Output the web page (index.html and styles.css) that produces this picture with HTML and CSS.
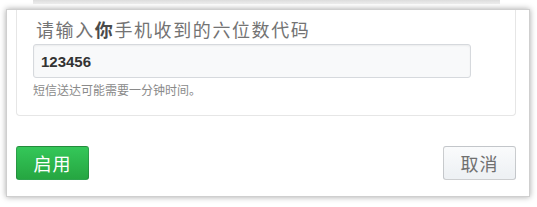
FILE: index.html
```html
<!DOCTYPE html>
<html lang="zh-CN">
<head>
    <meta charset="UTF-8">
    <meta name="viewport" content="width=device-width, initial-scale=1.0">
    <title>两步验证</title>
    <link rel="stylesheet" href="styles.css">
</head>
<body>
    <div class="shade"></div>
    <div class="modal">
        <div class="panel">
            <label class="label" for="otp">请输入<b>你</b>手机收到的六位数代码</label>
            <input class="input" id="otp" type="text" value="123456">
            <p class="hint">短信送达可能需要一分钟时间。</p>
        </div>
        <div class="footer">
            <button class="btn btn-primary">启用</button>
            <button class="btn btn-cancel">取消</button>
        </div>
    </div>
</body>
</html>
```

FILE: styles.css
```css
* {
    margin: 0;
    padding: 0;
    box-sizing: border-box;
}

body {
    width: 537px;
    height: 207px;
    overflow: hidden;
    background: #fff;
    font-family: "Liberation Sans", "Noto Sans CJK SC", sans-serif;
}

.shade {
    height: 4px;
    margin: 0 37px 0 33px;
    background: linear-gradient(#dcdcdc, #efefef);
}

.modal {
    width: 524px;
    height: 188px;
    margin: 5px 0 0 6px;
    border: 1px solid #cfcfcf;
    background: #fff;
    box-shadow: 0 0 6px rgba(0, 0, 0, 0.35);
}

.panel {
    height: 106px;
    margin: 0 13px 0 9px;
    padding: 9px 0 0 16px;
    border: 1px solid #e6e6e6;
    border-top: 0;
    border-radius: 0 0 4px 4px;
}

.label {
    display: block;
    height: 24px;
    padding-left: 3px;
    color: #737373;
    font-size: 18px;
    line-height: 24px;
    letter-spacing: 1.6px;
}

.label b {
    color: #4a4a4a;
}

.input {
    display: block;
    width: 438px;
    height: 34px;
    margin-top: 1px;
    padding: 0 7px;
    border: 1px solid #d6d9dd;
    border-radius: 3px;
    background: #f8f9fa;
    box-shadow: inset 0 1px 2px rgba(27, 31, 35, 0.06);
    color: #333;
    font-family: inherit;
    font-size: 15px;
    font-weight: 700;
    outline: none;
}

.hint {
    margin-top: 5px;
    color: #8a8a8a;
    font-size: 12px;
    line-height: 16px;
}

.footer {
    display: flex;
    justify-content: space-between;
    margin: 30px 13px 0 9px;
}

.btn {
    width: 73px;
    height: 34px;
    border: 1px solid rgba(27, 31, 35, 0.2);
    border-radius: 3px;
    font-family: inherit;
    font-size: 18px;
    letter-spacing: 1px;
    cursor: pointer;
}

.btn-primary {
    background: linear-gradient(#34c759, #26a641);
    color: #fff;
}

.btn-cancel {
    background: linear-gradient(#fafbfc, #eef1f4 90%);
    color: #707070;
}
```
